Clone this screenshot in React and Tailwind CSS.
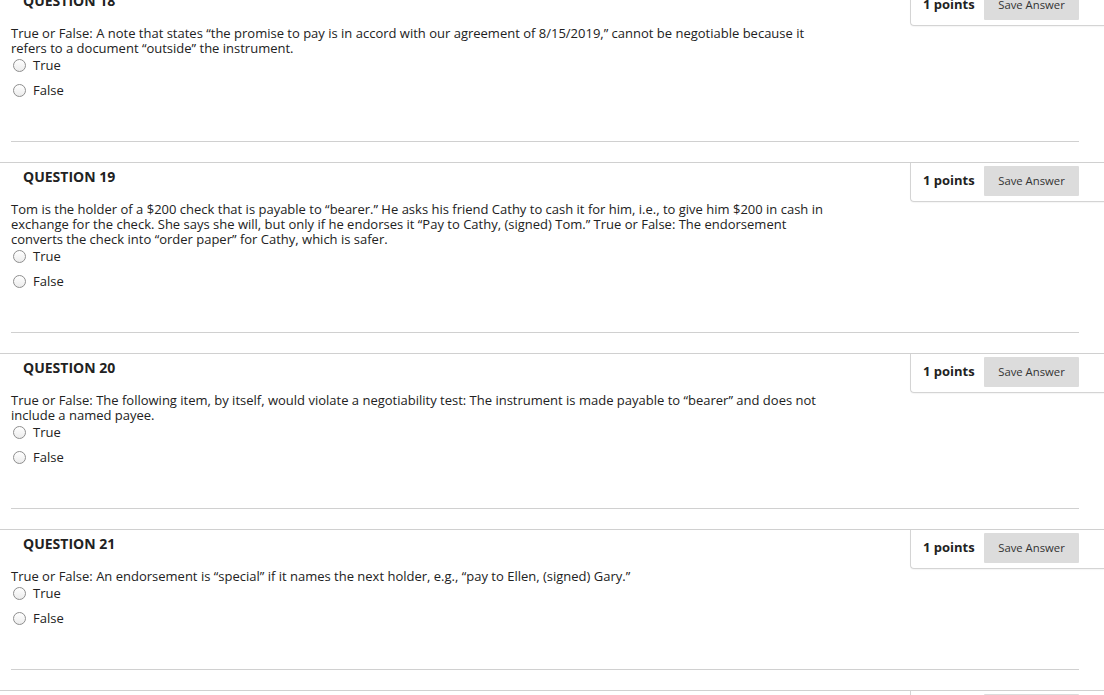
import React from 'react';

const questions = [
  {
    num: 18,
    text: 'True or False: A note that states \u201cthe promise to pay is in accord with our agreement of 8/15/2019,\u201d cannot be negotiable because it refers to a document \u201coutside\u201d the instrument.',
  },
  {
    num: 19,
    text: 'Tom is the holder of a $200 check that is payable to \u201cbearer.\u201d He asks his friend Cathy to cash it for him, i.e., to give him $200 in cash in exchange for the check. She says she will, but only if he endorses it \u201cPay to Cathy, (signed) Tom.\u201d True or False: The endorsement converts the check into \u201corder paper\u201d for Cathy, which is safer.',
  },
  {
    num: 20,
    text: 'True or False: The following item, by itself, would violate a negotiability test: The instrument is made payable to \u201cbearer\u201d and does not include a named payee.',
  },
  {
    num: 21,
    text: 'True or False: An endorsement is \u201cspecial\u201d if it names the next holder, e.g., \u201cpay to Ellen, (signed) Gary.\u201d',
  },
  { num: 22, text: '' },
];

function Radio({ label }) {
  return (
    <label className="flex items-center h-[19px] pl-[2px]">
      <span className="w-[13px] h-[13px] rounded-full border border-[#8e8e8e] bg-gradient-to-b from-white to-[#ececec] shrink-0"></span>
      <span className="ml-[7px]">{label}</span>
    </label>
  );
}

function Question({ num, text, first }) {
  return (
    <div className={first ? '-mt-[14px]' : 'mt-[20px]'}>
      <div className="border-t border-[#d0d0d0] flex justify-between">
        <h3 className="pl-[23px] pt-[4px] text-[14px] leading-[20px] font-bold text-[#222]">
          QUESTION {num}
        </h3>
        <div className="w-[194px] h-[39px] border-l border-b border-[#d4d4d4] rounded-bl-[4px] shadow-[0_1px_1px_rgba(0,0,0,0.04)] flex items-start pt-[3px]">
          <span className="pl-[12px] pt-[5px] text-[13px] font-bold text-[#222] w-[73px]">1 points</span>
          <button className="w-[95px] h-[30px] bg-[#dcdcdc] text-[11.3px] text-[#333] rounded-[1px]">
            Save Answer
          </button>
        </div>
      </div>
      <div className="px-[11px]">
        <p className="w-[820px] text-[13px] leading-[15px] text-[#222]">{text}</p>
        <div className="text-[13px] text-[#222]">
          <Radio label="True" />
          <div className="mt-[6px]">
            <Radio label="False" />
          </div>
        </div>
        <div className="mt-[41px] mr-[14px] border-b border-[#d0d0d0]"></div>
      </div>
    </div>
  );
}

export default function App() {
  return (
    <div
      className="w-[1104px] h-[695px] overflow-hidden bg-white"
      style={{ fontFamily: '"Open Sans", "Noto Sans", sans-serif' }}
    >
      {questions.map((q, i) => (
        <Question key={q.num} {...q} first={i === 0} />
      ))}
    </div>
  );
}
